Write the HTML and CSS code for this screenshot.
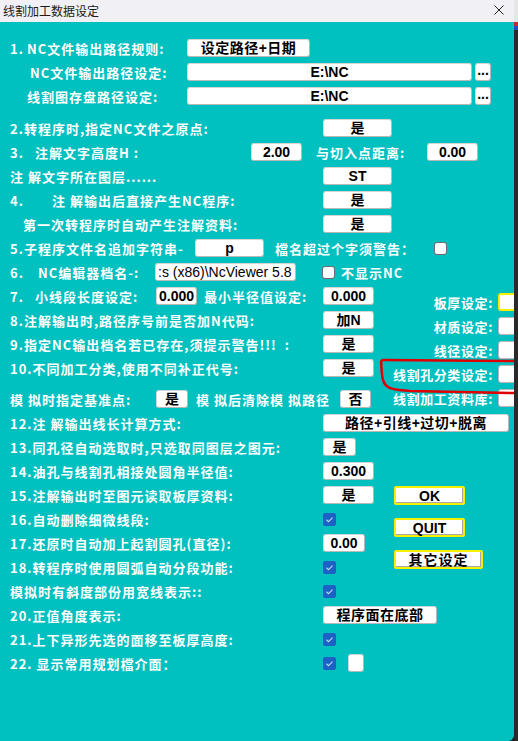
FILE: index.html
```html
<!DOCTYPE html>
<html lang="zh">
<head>
<meta charset="utf-8">
<title>线割加工数据设定</title>
<link rel="stylesheet" href="styles.css">
</head>
<body>
<div class="window">
  <div class="titlebar">
    <span class="title">线割加工数据设定</span>
    <svg class="close" viewBox="0 0 10 10"><path d="M0.5 0.5 L9.5 9.5 M9.5 0.5 L0.5 9.5" stroke="#222" stroke-width="1" fill="none"/></svg>
  </div>
  <div class="content">
    <div class="row">
      <span class="lbl l-r1"><span class="num n17">1.</span>NC文件输出路径规则:</span>
      <span class="ctl c-date">设定路径+日期</span>
    </div>
    <div class="row">
      <span class="lbl l-r1 ind20">NC文件输出路径设定:</span>
      <span class="ctl c-path">E:\NC</span>
      <span class="ctl c-dots">...</span>
    </div>
    <div class="row">
      <span class="lbl l-r1 ind17">线割图存盘路径设定:</span>
      <span class="ctl c-path">E:\NC</span>
      <span class="ctl c-dots">...</span>
    </div>
    <div class="row gap8">
      <span class="lbl l-std">2.转程序时,指定NC文件之原点:</span>
      <span class="ctl c-69">是</span>
    </div>
    <div class="row">
      <span class="lbl l-r5"><span class="num n25">3.</span>注解文字高度H :</span>
      <span class="ctl c-51">2.00</span>
      <span class="lbl l-r5b">与切入点距离:</span>
      <span class="ctl c-51">0.00</span>
    </div>
    <div class="row">
      <span class="lbl l-std">注 解文字所在图层......</span>
      <span class="ctl c-69">ST</span>
    </div>
    <div class="row">
      <span class="lbl l-std"><span class="num n42">4.</span>注 解输出后直接产生NC程序:</span>
      <span class="ctl c-69">是</span>
    </div>
    <div class="row">
      <span class="lbl l-std ind13">第一次转程序时自动产生注解资料:</span>
      <span class="ctl c-69">是</span>
    </div>
    <div class="row">
      <span class="lbl l-r9">5.子程序文件名追加字符串-</span>
      <span class="ctl c-69">p</span>
      <span class="lbl l-r9b">檔名超过个字须警告：</span>
      <span class="chk"></span>
    </div>
    <div class="row">
      <span class="lbl l-r10"><span class="num n28">6.</span>NC编辑器档名-:</span>
      <span class="ctl c-editor">:s (x86)\NcViewer 5.8</span>
      <span class="chk m26"></span>
      <span class="lbl m6">不显示NC</span>
    </div>

    <div class="split">
      <div class="col-left">
        <div class="row">
          <span class="lbl l-r11"><span class="num n25">7.</span>小线段长度设定:</span>
          <span class="ctl c-41">0.000</span>
          <span class="lbl l-r11b">最小半径值设定:</span>
          <span class="ctl c-51">0.000</span>
        </div>
        <div class="row">
          <span class="lbl l-std">8.注解输出时,路径序号前是否加N代码:</span>
          <span class="ctl c-51">加N</span>
        </div>
        <div class="row">
          <span class="lbl l-std">9.指定NC输出档名若已存在,须提示警告!!!  :</span>
          <span class="ctl c-51">是</span>
        </div>
        <div class="row">
          <span class="lbl l-std">10.不同加工分类,使用不同补正代号:</span>
          <span class="ctl c-51">是</span>
        </div>
        <div class="row gap7">
          <span class="lbl l-r11">模 拟时指定基准点:</span>
          <span class="ctl c-32">是</span>
          <span class="lbl l-r15b">模 拟后清除模 拟路径</span>
          <span class="ctl c-31">否</span>
        </div>
      </div>
      <div class="panel">
        <div class="prow"><span class="lbl plbl">板厚设定:</span><span class="pbox focus"></span></div>
        <div class="prow"><span class="lbl plbl">材质设定:</span><span class="pbox"></span></div>
        <div class="prow"><span class="lbl plbl">线径设定:</span><span class="pbox"></span></div>
        <div class="prow"><span class="lbl plbl">线割孔分类设定:</span><span class="pbox"></span></div>
        <div class="prow"><span class="lbl plbl">线割加工资料库:</span><span class="pbox"></span></div>
      </div>
    </div>

    <div class="row">
      <span class="lbl l-std">12.注 解输出线长计算方式:</span>
      <span class="ctl c-wide">路径+引线+过切+脱离</span>
    </div>
    <div class="row">
      <span class="lbl l-std">13.同孔径自动选取时,只选取同图层之图元:</span>
      <span class="ctl c-33">是</span>
    </div>
    <div class="row">
      <span class="lbl l-std">14.油孔与线割孔相接处圆角半径值:</span>
      <span class="ctl c-51">0.300</span>
    </div>

    <div class="split">
      <div class="col-left2">
        <div class="row">
          <span class="lbl l-std">15.注解输出时至图元读取板厚资料:</span>
          <span class="ctl c-51">是</span>
        </div>
        <div class="row">
          <span class="lbl l-std">16.自动删除细微线段:</span>
          <span class="chk on"><svg viewBox="0 0 13 13"><path d="M3.5 6.8 L5.5 8.6 L9.5 4.6" fill="none" stroke="#b9d3f5" stroke-width="1.2"/></svg></span>
        </div>
        <div class="row">
          <span class="lbl l-std">17.还原时自动加上起割圆孔(直径):</span>
          <span class="ctl c-42">0.00</span>
        </div>
        <div class="row">
          <span class="lbl l-std">18.转程序时使用圆弧自动分段功能:</span>
          <span class="chk on"><svg viewBox="0 0 13 13"><path d="M3.5 6.8 L5.5 8.6 L9.5 4.6" fill="none" stroke="#b9d3f5" stroke-width="1.2"/></svg></span>
        </div>
        <div class="row">
          <span class="lbl l-std">模拟时有斜度部份用宽线表示::</span>
          <span class="chk on"><svg viewBox="0 0 13 13"><path d="M3.5 6.8 L5.5 8.6 L9.5 4.6" fill="none" stroke="#b9d3f5" stroke-width="1.2"/></svg></span>
        </div>
      </div>
      <div class="actions">
        <span class="ybtn b-ok">OK</span>
        <span class="ybtn b-ok">QUIT</span>
        <span class="ybtn b-other">其它设定</span>
      </div>
    </div>

    <div class="row">
      <span class="lbl l-std">20.正值角度表示:</span>
      <span class="ctl c-114">程序面在底部</span>
    </div>
    <div class="row">
      <span class="lbl l-std">21.上下异形先选的面移至板厚高度:</span>
      <span class="chk on"><svg viewBox="0 0 13 13"><path d="M3.5 6.8 L5.5 8.6 L9.5 4.6" fill="none" stroke="#b9d3f5" stroke-width="1.2"/></svg></span>
    </div>
    <div class="row">
      <span class="lbl l-std">22. 显示常用规划檔介面：</span>
      <span class="chk on"><svg viewBox="0 0 13 13"><path d="M3.5 6.8 L5.5 8.6 L9.5 4.6" fill="none" stroke="#b9d3f5" stroke-width="1.2"/></svg></span>
      <span class="ctl c-blank"></span>
    </div>
  </div>
  <svg class="annot" viewBox="0 0 514 741" width="514" height="741">
    <path d="M514 361 L383 360 C381 360 381 362 381.5 368 C382 378 383 384 388 387 C392 390 398 390 410 391 L514 393" fill="none" stroke="#e00000" stroke-width="2.5" stroke-linecap="round" stroke-linejoin="round"/>
  </svg>
</div>
<div class="strip"></div>
</body>
</html>
```
FILE: styles.css
```css
* {
  box-sizing: border-box;
}

body {
  margin: 0;
  width: 518px;
  height: 741px;
  display: flex;
  overflow: hidden;
  background: #1d1d1d;
  font-family: "Noto Sans CJK SC", sans-serif;
}

.window {
  position: relative;
  flex: 0 0 514px;
  width: 514px;
  height: 741px;
  background: #00c0c0;
  overflow: hidden;
  border-bottom-right-radius: 6px;
}

.strip {
  flex: 0 0 4px;
  background: linear-gradient(#e6e6e6 0 22px, #c03030 22px 26px, #2050c0 26px 30px, #2a2a2a 30px);
}

.titlebar {
  height: 22px;
  background: #f0f0f5;
  display: flex;
  align-items: center;
  justify-content: space-between;
  padding: 0 10px 0 3px;
}

.title {
  font-size: 12px;
  color: #1a1a1a;
  line-height: 1;
}

.close {
  width: 10px;
  height: 10px;
  margin-top: -3px;
}

.content {
  padding: 14px 0 0 10px;
}

.row {
  display: flex;
  align-items: center;
  height: 24px;
}

.gap8 { margin-top: 8px; }
.gap7 { margin-top: 7px; }

.lbl {
  flex: 0 0 auto;
  color: #fff;
  font-weight: 700;
  font-size: 13px;
  letter-spacing: 1px;
  white-space: pre;
  line-height: 1;
}

.num {
  display: inline-block;
}
.n17 { width: 17px; }
.n25 { width: 25px; }
.n28 { width: 28px; }
.n42 { width: 42px; }

.ind20 { padding-left: 20px; }
.ind17 { padding-left: 17px; }
.ind13 { padding-left: 13px; }

.l-r1 { width: 177px; }
.l-std { width: 313px; }
.l-r5 { width: 241px; }
.l-r5b { width: 111px; margin-left: 14px; }
.l-r9 { width: 185px; }
.l-r9b { width: 159px; margin-left: 11px; }
.l-r10 { width: 145px; }
.l-r11 { width: 146px; }
.l-r11b { width: 119px; margin-left: 7px; }
.l-r15b { width: 144px; margin-left: 8px; }
.m6 { margin-left: 6px; }

.ctl {
  flex: 0 0 auto;
  height: 18px;
  background: #fff;
  border: 1px solid #d4d4d4;
  border-right-color: #b8b8b8;
  border-bottom-color: #b8b8b8;
  border-radius: 3px;
  display: flex;
  align-items: center;
  justify-content: center;
  color: #000;
  font-family: "Liberation Sans", "Noto Sans CJK SC", sans-serif;
  font-weight: 700;
  font-size: 14px;
  line-height: 1;
  white-space: nowrap;
  overflow: hidden;
}

.c-date { width: 123px; font-size: 14px; letter-spacing: 0.5px; }
.c-path { width: 285px; }
.c-dots { width: 16px; margin-left: 3px; align-items: flex-end; padding-bottom: 3px; }
.c-69 { width: 69px; }
.c-51 { width: 51px; }
.c-41 { width: 41px; }
.c-42 { width: 42px; }
.c-32 { width: 32px; }
.c-31 { width: 31px; }
.c-33 { width: 33px; }
.c-114 { width: 114px; letter-spacing: 0.5px; }
.c-wide { width: 186px; letter-spacing: 0.5px; }
.c-blank { width: 16px; height: 18px; margin-left: 12px; }
.c-editor {
  width: 141px;
  justify-content: flex-start;
  padding-left: 2px;
  font-weight: 400;
}

.chk {
  flex: 0 0 13px;
  width: 13px;
  height: 13px;
  border: 1px solid #6a6a6a;
  border-radius: 3px;
  background: #fff;
  display: block;
}
.chk svg {
  display: block;
  width: 13px;
  height: 13px;
}
.chk.on {
  border: none;
  border-radius: 2px;
  background: #1c62c4;
}
.m26 { margin-left: 26px; }

.split {
  display: flex;
}

.col-left {
  flex: 0 0 370px;
}

.panel {
  flex: 0 0 138px;
  padding-top: 6px;
}

.prow {
  display: flex;
  align-items: center;
  height: 24px;
}

.plbl {
  flex: 1 1 auto;
  text-align: right;
  letter-spacing: 0.6px;
}

.pbox {
  flex: 0 0 20px;
  height: 18px;
  margin-left: 5px;
  background: #fff;
  border: 1px solid #b8b8b8;
  border-radius: 3px;
}
.pbox.focus {
  border: 2px solid #f4f000;
}

.col-left2 {
  flex: 0 0 384px;
}

.actions {
  display: flex;
  flex-direction: column;
  align-items: flex-start;
  gap: 13px;
  padding-top: 3px;
}

.ybtn {
  height: 19px;
  display: flex;
  align-items: center;
  justify-content: center;
  background: #fff;
  border: 2px solid #f4f000;
  box-shadow: inset -1px -1px 0 #a8a8a8;
  border-radius: 2px;
  color: #000;
  font-family: "Liberation Sans", "Noto Sans CJK SC", sans-serif;
  font-weight: 700;
  font-size: 14px;
  line-height: 1;
}
.b-ok { width: 71px; }
.b-other { width: 89px; letter-spacing: 1px; }

.annot {
  position: absolute;
  left: 0;
  top: 0;
  pointer-events: none;
}
```
